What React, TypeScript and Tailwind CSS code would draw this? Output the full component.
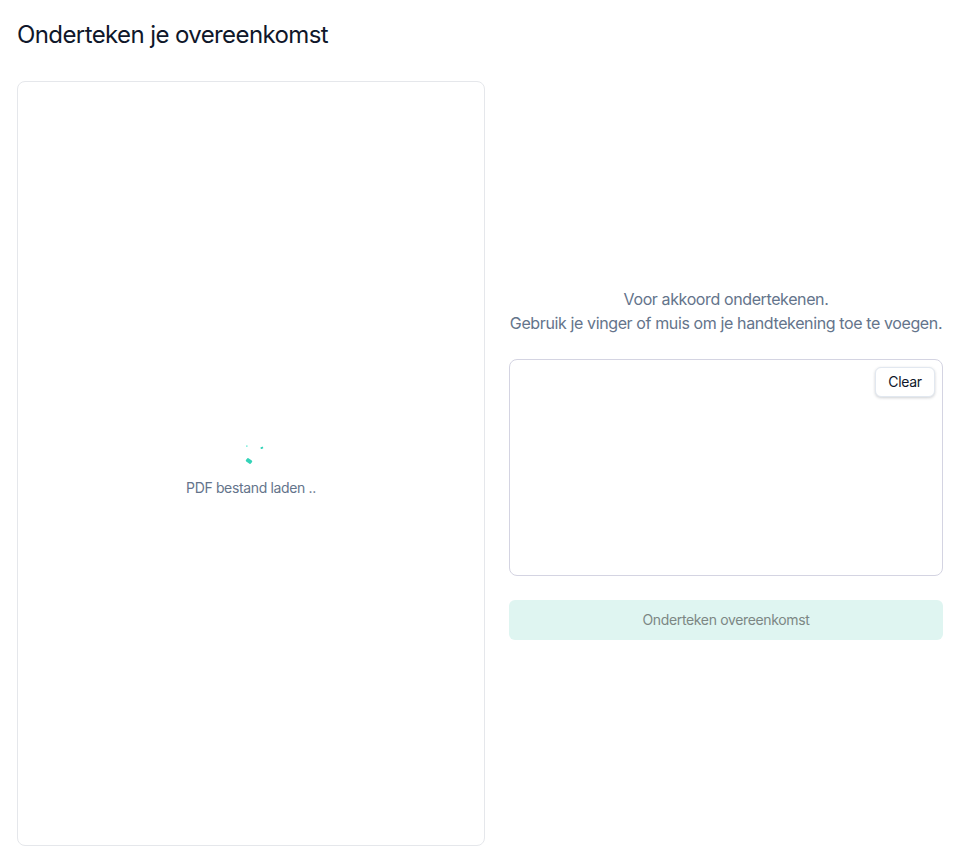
// Signing page: PDF preview on the left, signature pad on the right
export default function App() {
  return (
    <div className="min-h-[867px] bg-white px-[17px] pt-[20px] font-['Inter',sans-serif] tracking-[-0.022em]">
      <h1 className="text-[24px] leading-[30px] font-normal tracking-tight text-[#0f172a]">
        Onderteken je overeenkomst
      </h1>

      <div className="mt-[31px] flex gap-[24px]">
        <div className="flex h-[765px] w-[468px] flex-col items-center justify-center rounded-lg border border-[#e5e7eb] bg-white pt-[11px]">
          <svg viewBox="0 0 30 30" className="ml-[8px] h-[30px] w-[30px]" aria-hidden="true">
            <rect x="6" y="5.5" width="1.6" height="1.2" fill="#5eead4" />
            <rect x="20.5" y="6.8" width="2.6" height="2" rx="0.6" fill="#34d3b8" transform="rotate(-20 22 7.6)" />
            <rect x="6" y="19" width="6" height="4" rx="1" fill="#34d3b8" transform="rotate(35 9 21)" />
          </svg>
          <p className="mt-[8px] text-sm leading-5 text-[#64748b]">PDF bestand laden ..</p>
        </div>

        <div className="flex w-[434px] flex-col justify-center">
          <p className="text-center text-base leading-[24px] tracking-[-0.024em] text-[#64748b]">
            Voor akkoord ondertekenen.
            <br />
            Gebruik je vinger of muis om je handtekening toe te voegen.
          </p>

          <div className="mt-[24px] flex h-[217px] justify-end rounded-lg border border-[#d4d4e2] bg-white p-[7px]">
            <button
              type="button"
              className="h-[30px] w-[60px] rounded-md border border-[#e2e8f0] bg-white text-sm text-[#0f172a] shadow-[0_1px_3px_rgba(15,23,42,0.2)]"
            >
              Clear
            </button>
          </div>

          <button
            type="button"
            disabled
            className="mt-[24px] h-[40px] rounded-md bg-[#dff5f1] text-sm text-[#7c8784]"
          >
            Onderteken overeenkomst
          </button>
        </div>
      </div>
    </div>
  );
}
